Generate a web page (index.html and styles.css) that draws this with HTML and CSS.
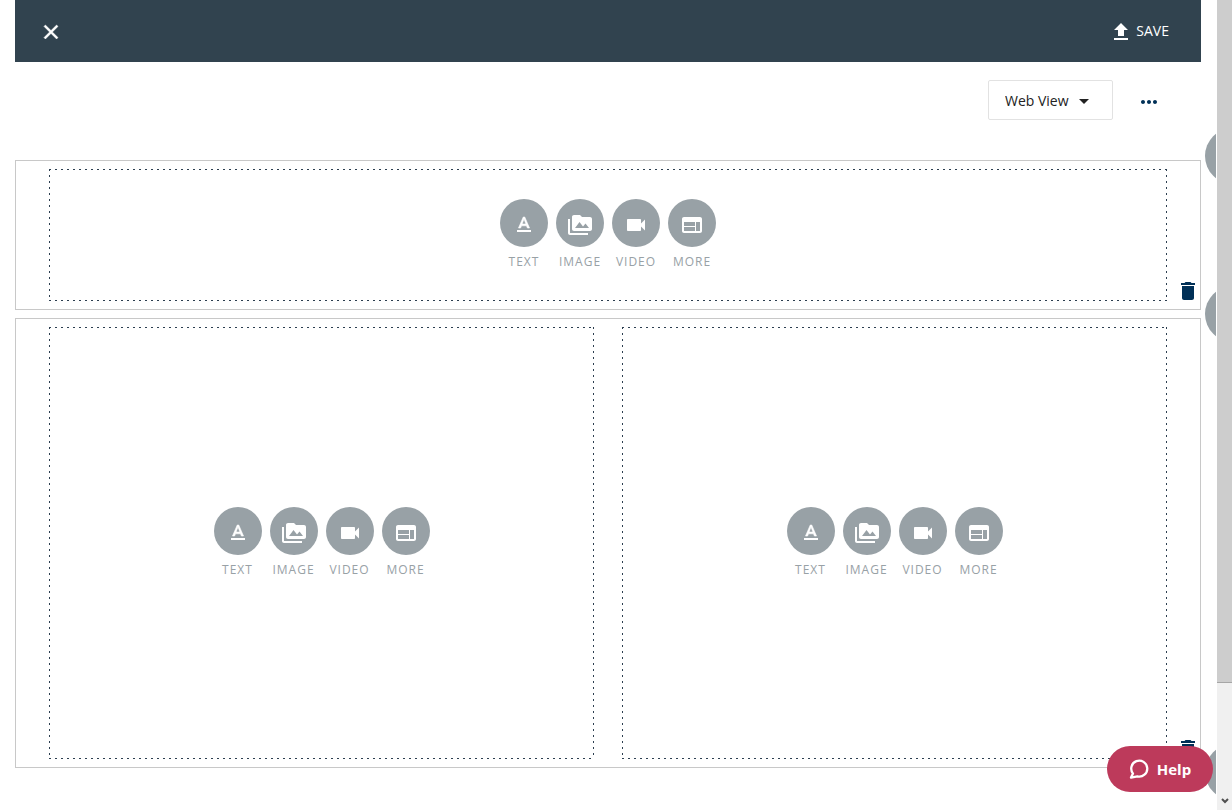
FILE: index.html
```html
<!DOCTYPE html>
<html lang="en">

<head>
    <meta charset="UTF-8">
    <meta name="viewport" content="width=device-width, initial-scale=1.0">
    <title>Page Editor</title>
    <link rel="stylesheet" href="styles.css">
</head>

<body>
    <!-- Shared icons -->
    <svg class="sprite" aria-hidden="true">
        <symbol id="icon-text" viewBox="0 0 24 24">
            <path d="M5 17v2h14v-2H5z" />
            <path stroke="currentColor" stroke-width=".6" d="M9.5 12.8h5l.9 2.2h2.1L12.75 4h-1.5L6.5 15h2.1l.9-2.2zM12 5.98L13.87 11h-3.74L12 5.98z" />
        </symbol>
        <symbol id="icon-image" viewBox="0 0 24 24">
            <path d="M2 6H0v5h.01L0 20c0 1.1.9 2 2 2h18v-2H2V6zm20-2h-8l-2-2H6c-1.1 0-1.99.9-1.99 2L4 16c0 1.1.9 2 2 2h16c1.1 0 2-.9 2-2V6c0-1.1-.9-2-2-2zM7 15l4.5-6 3.5 4.51 2.5-3.01L21 15H7z" />
        </symbol>
        <symbol id="icon-video" viewBox="0 0 24 24">
            <path d="M17 10.5V7c0-.55-.45-1-1-1H4c-.55 0-1 .45-1 1v10c0 .55.45 1 1 1h12c.55 0 1-.45 1-1v-3.5l4 4v-11l-4 4z" />
        </symbol>
        <symbol id="icon-more" viewBox="0 0 24 24">
            <path d="M20 4H4c-1.1 0-1.99.9-1.99 2L2 18c0 1.1.9 2 2 2h16c1.1 0 2-.9 2-2V6c0-1.1-.9-2-2-2zm-5 14H4v-4h11v4zm0-5H4V9h11v4zm5 5h-4V9h4v9z" />
        </symbol>
        <symbol id="icon-delete" viewBox="0 0 24 24">
            <path d="M6 19c0 1.1.9 2 2 2h8c1.1 0 2-.9 2-2V7H6v12zM19 4h-3.5l-1-1h-5l-1 1H5v2h14V4z" />
        </symbol>
    </svg>

    <div class="window">
        <div class="page">
            <header class="header">
                <button class="header-button" type="button" aria-label="Close">
                    <svg class="icon" viewBox="0 0 24 24">
                        <path stroke="currentColor" stroke-width=".5" d="M19 6.41L17.59 5 12 10.59 6.41 5 5 6.41 10.59 12 5 17.59 6.41 19 12 13.41 17.59 19 19 17.59 13.41 12z" />
                    </svg>
                </button>
                <button class="header-button" type="button">
                    <svg class="icon" viewBox="0 0 24 24">
                        <path d="M9 16h6v-6h4l-7-7-7 7h4v6zm-4 2h14v2H5v-2z" />
                    </svg>
                    <span>SAVE</span>
                </button>
            </header>

            <div class="toolbar">
                <div class="view-picker">
                    <select class="view-select" aria-label="View">
                        <option>Web View</option>
                        <option>Mobile View</option>
                    </select>
                    <svg class="icon view-caret" viewBox="0 0 24 24">
                        <path d="M7 10l5 5 5-5z" />
                    </svg>
                </div>
                <button class="options" type="button" aria-label="Options">
                    <svg class="icon" viewBox="0 0 24 24">
                        <path d="M6 10c-1.1 0-2 .9-2 2s.9 2 2 2 2-.9 2-2-.9-2-2-2zm12 0c-1.1 0-2 .9-2 2s.9 2 2 2 2-.9 2-2-.9-2-2-2zm-6 0c-1.1 0-2 .9-2 2s.9 2 2 2 2-.9 2-2-.9-2-2-2z" />
                    </svg>
                </button>
            </div>

            <main class="rows">
                <section class="row">
                    <button class="add-row add-before" type="button" aria-label="Add row"></button>
                    <div class="cells">
                        <div class="cell">
                            <button class="tool" type="button"><span class="circle"><svg class="icon"><use href="#icon-text" /></svg></span><span class="label">TEXT</span></button>
                            <button class="tool" type="button"><span class="circle"><svg class="icon"><use href="#icon-image" /></svg></span><span class="label">IMAGE</span></button>
                            <button class="tool" type="button"><span class="circle"><svg class="icon"><use href="#icon-video" /></svg></span><span class="label">VIDEO</span></button>
                            <button class="tool" type="button"><span class="circle"><svg class="icon"><use href="#icon-more" /></svg></span><span class="label">MORE</span></button>
                        </div>
                    </div>
                    <button class="delete" type="button" aria-label="Delete row"><svg class="icon"><use href="#icon-delete" /></svg></button>
                    <button class="add-row add-after" type="button" aria-label="Add row"></button>
                </section>

                <section class="row row-tall">
                    <div class="cells">
                        <div class="cell">
                            <button class="tool" type="button"><span class="circle"><svg class="icon"><use href="#icon-text" /></svg></span><span class="label">TEXT</span></button>
                            <button class="tool" type="button"><span class="circle"><svg class="icon"><use href="#icon-image" /></svg></span><span class="label">IMAGE</span></button>
                            <button class="tool" type="button"><span class="circle"><svg class="icon"><use href="#icon-video" /></svg></span><span class="label">VIDEO</span></button>
                            <button class="tool" type="button"><span class="circle"><svg class="icon"><use href="#icon-more" /></svg></span><span class="label">MORE</span></button>
                        </div>
                        <div class="cell">
                            <button class="tool" type="button"><span class="circle"><svg class="icon"><use href="#icon-text" /></svg></span><span class="label">TEXT</span></button>
                            <button class="tool" type="button"><span class="circle"><svg class="icon"><use href="#icon-image" /></svg></span><span class="label">IMAGE</span></button>
                            <button class="tool" type="button"><span class="circle"><svg class="icon"><use href="#icon-video" /></svg></span><span class="label">VIDEO</span></button>
                            <button class="tool" type="button"><span class="circle"><svg class="icon"><use href="#icon-more" /></svg></span><span class="label">MORE</span></button>
                        </div>
                    </div>
                    <button class="delete" type="button" aria-label="Delete row"><svg class="icon"><use href="#icon-delete" /></svg></button>
                    <button class="add-row add-after" type="button" aria-label="Add row"></button>
                </section>
            </main>
        </div>

        <div class="scrollbar" aria-hidden="true">
            <div class="thumb"></div>
            <svg class="scroll-arrow" viewBox="0 0 8 6">
                <path d="M1 1l3 3 3-3" />
            </svg>
        </div>
    </div>

    <button class="help" type="button">
        <svg class="help-icon" viewBox="0 0 20 20">
            <path d="M4 14.6A8 8 0 1 1 8.4 17.4L2 18.6z" />
        </svg>
        <span>Help</span>
    </button>
</body>

</html>
```
FILE: styles.css
```css
* {
    box-sizing: border-box;
}

body {
    margin: 0;
    background-color: #fff;
    color: #222;
    font-family: "Open Sans", "Noto Sans", sans-serif;
    font-size: 14px;
}

button {
    margin: 0;
    padding: 0;
    border: 0;
    background: none;
    color: inherit;
    font: inherit;
    cursor: pointer;
}

.sprite {
    display: none;
}

.icon {
    display: block;
    width: 24px;
    height: 24px;
    fill: currentColor;
}

.window {
    display: flex;
    height: 100vh;
}

.page {
    flex: 1;
    min-width: 0;
    padding: 0 15px;
    overflow: hidden;
}

/* Header */
.header {
    display: flex;
    align-items: center;
    justify-content: space-between;
    height: 62px;
    padding: 1px 32px 0 24px;
    background-color: #31434f;
    color: #fff;
}

.header-button {
    display: flex;
    align-items: center;
    gap: 3px;
    line-height: 20px;
}

.header-button span {
    padding-bottom: 2px;
}

/* Toolbar */
.toolbar {
    display: flex;
    align-items: center;
    justify-content: flex-end;
    gap: 24px;
    padding: 18px 40px 40px 0;
}

.view-picker {
    position: relative;
}

.view-select {
    display: block;
    appearance: none;
    width: 125px;
    height: 40px;
    padding: 0 40px 0 16px;
    border: 1px solid #e2e2e2;
    border-radius: 2px;
    background-color: #fff;
    color: #222;
    font: inherit;
}

.view-caret {
    position: absolute;
    top: 9px;
    right: 17px;
    pointer-events: none;
}

.options {
    padding-top: 4px;
    color: #003057;
}

/* Rows */
.rows {
    display: flex;
    flex-direction: column;
    gap: 8px;
}

.row {
    position: relative;
    display: flex;
    min-height: 150px;
    padding-left: 33px;
    border: 1px solid #c8c8c8;
}

.row-tall {
    min-height: 450px;
}

.cells {
    display: flex;
    flex: 1;
    gap: 28px;
    margin: 8px 0;
}

/* Border of 2px dashes with 4px gaps, one gradient per side */
.cell {
    display: flex;
    flex: 1;
    align-items: center;
    justify-content: center;
    gap: 8px;
    background-image:
        linear-gradient(to right, #2c3e50 2px, transparent 2px),
        linear-gradient(to right, #2c3e50 2px, transparent 2px),
        linear-gradient(to bottom, #2c3e50 2px, transparent 2px),
        linear-gradient(to bottom, #2c3e50 2px, transparent 2px);
    background-size: 6px 1px, 6px 1px, 1px 6px, 1px 6px;
    background-position: left top, left bottom, left top, right top;
    background-repeat: repeat-x, repeat-x, repeat-y, repeat-y;
}

.tool {
    display: flex;
    flex-direction: column;
    align-items: center;
    width: 48px;
    color: #98a1a6;
}

.circle {
    display: flex;
    align-items: center;
    justify-content: center;
    width: 48px;
    height: 48px;
    padding-top: 4px;
    border-radius: 50%;
    background-color: #98a1a6;
    color: #fff;
}

.label {
    padding-top: 6px;
    font-size: 12px;
    line-height: 18px;
    letter-spacing: 1px;
}

.delete {
    align-self: flex-end;
    margin: 0 0 6px 9px;
    color: #003057;
}

.add-row {
    position: absolute;
    right: -61px;
    width: 56px;
    height: 56px;
    border-radius: 50%;
    background-color: #98a1a6;
}

.add-before {
    top: -33px;
}

.add-after {
    bottom: -33px;
}

/* Scrollbar */
.scrollbar {
    display: flex;
    flex-direction: column;
    align-items: center;
    justify-content: space-between;
    width: 16px;
    padding-bottom: 6px;
    border-left: 1px solid #fff;
    background-color: #f0f0f0;
}

.thumb {
    width: 100%;
    height: 85%;
    border-bottom: 1px solid #a6a6a6;
    background-color: #cdcdcd;
}

.scroll-arrow {
    width: 8px;
    height: 6px;
    fill: none;
    stroke: #505050;
    stroke-width: 2;
}

/* Help button */
.help {
    position: fixed;
    right: 19px;
    bottom: 18px;
    display: flex;
    align-items: center;
    justify-content: center;
    gap: 8px;
    width: 106px;
    height: 46px;
    border-radius: 23px;
    background-color: #bd3a5b;
    color: #fff;
    font-size: 15px;
    font-weight: 700;
}

.help-icon {
    width: 20px;
    height: 20px;
    fill: none;
    stroke: #fff;
    stroke-width: 2.3;
    stroke-linejoin: round;
}
```
